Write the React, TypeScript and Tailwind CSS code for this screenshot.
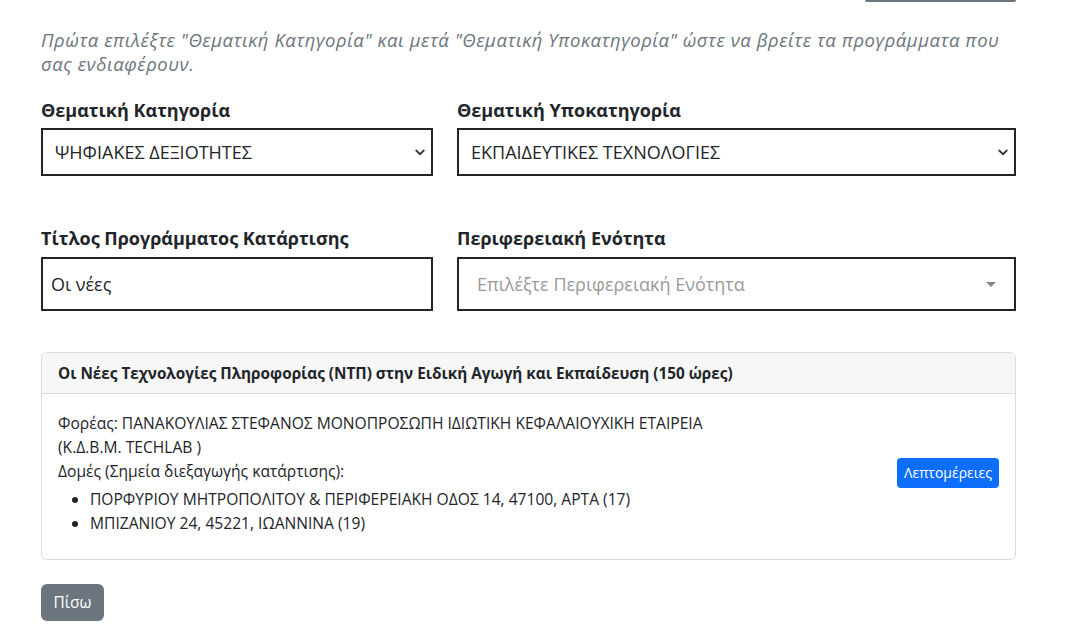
import React from 'react';

const font = { fontFamily: '"Open Sans", "Noto Sans", sans-serif' };

function Chevron() {
  return (
    <svg width="12" height="12" viewBox="0 0 16 16" className="text-[#343a40]">
      <path d="M3 6l5 5 5-5" fill="none" stroke="currentColor" strokeWidth="2.4" strokeLinecap="round" strokeLinejoin="round" />
    </svg>
  );
}

function SelectBox({ value }: { value: string }) {
  return (
    <div className="flex h-[48px] items-center justify-between border-2 border-[#212529] bg-white pl-[12px] pr-[5px] text-[18px] text-[#212529]">
      <span>{value}</span>
      <Chevron />
    </div>
  );
}

export default function App() {
  return (
    <div className="min-h-[643px] bg-white text-[#212529]" style={font}>
      <div className="ml-[41px] w-[975px]">
        <div className="flex justify-end">
          <div className="h-[2px] w-[151px] rounded-b bg-[#6c757d]" />
        </div>

        <p className="mt-[26px] max-w-[970px] text-[18.5px] italic leading-[24px] tracking-[0.03em] text-[#6c757d]">
          Πρώτα επιλέξτε "Θεματική Κατηγορία" και μετά "Θεματική Υποκατηγορία" ώστε να βρείτε τα προγράμματα που σας ενδιαφέρουν.
        </p>

        <div className="mt-[22px] grid grid-cols-[392px_559px] gap-x-[24px]">
          <div>
            <label className="block text-[18px] font-bold leading-[24px]">Θεματική Κατηγορία</label>
            <div className="mt-[6px]">
              <SelectBox value="ΨΗΦΙΑΚΕΣ ΔΕΞΙΟΤΗΤΕΣ" />
            </div>
          </div>
          <div>
            <label className="block text-[18px] font-bold leading-[24px]">Θεματική Υποκατηγορία</label>
            <div className="mt-[6px]">
              <SelectBox value="ΕΚΠΑΙΔΕΥΤΙΚΕΣ ΤΕΧΝΟΛΟΓΙΕΣ" />
            </div>
          </div>
        </div>

        <div className="mt-[50px] grid grid-cols-[392px_559px] gap-x-[24px]">
          <div>
            <label className="block text-[18px] font-bold leading-[24px]">Τίτλος Προγράμματος Κατάρτισης</label>
            <div className="mt-[7px] flex h-[54px] items-center border-2 border-[#212529] pl-[8px] text-[18px]">
              Οι νέες
            </div>
          </div>
          <div>
            <label className="block text-[18px] font-bold leading-[24px]">Περιφερειακή Ενότητα</label>
            <div className="mt-[7px] flex h-[54px] items-center justify-between border-2 border-[#212529] pl-[18px] pr-[18px] text-[18px] text-[#999]">
              <span>Επιλέξτε Περιφερειακή Ενότητα</span>
              <span className="h-0 w-0 border-x-[5px] border-t-[5px] border-x-transparent border-t-[#888]" />
            </div>
          </div>
        </div>

        <div className="mt-[41px] overflow-hidden rounded-[6px] border border-[#dcdcdc]">
          <div className="flex h-[41px] items-center border-b border-[#dcdcdc] bg-[#f7f7f7] px-[16px] text-[15.3px] font-bold">
            Οι Νέες Τεχνολογίες Πληροφορίας (ΝΤΠ) στην Ειδική Αγωγή και Εκπαίδευση (150 ώρες)
          </div>
          <div className="flex items-center justify-between px-[16px] pt-[17px] pb-[24px] text-[15.6px] leading-[24px]">
            <div>
              <div>Φορέας: ΠΑΝΑΚΟΥΛΙΑΣ ΣΤΕΦΑΝΟΣ ΜΟΝΟΠΡΟΣΩΠΗ ΙΔΙΩΤΙΚΗ ΚΕΦΑΛΑΙΟΥΧΙΚΗ ΕΤΑΙΡΕΙΑ</div>
              <div>(Κ.Δ.Β.Μ. TECHLAB )</div>
              <div>Δομές (Σημεία διεξαγωγής κατάρτισης):</div>
              <ul className="mt-[4px] list-disc pl-[32px]">
                <li>ΠΟΡΦΥΡΙΟΥ ΜΗΤΡΟΠΟΛΙΤΟΥ &amp; ΠΕΡΙΦΕΡΕΙΑΚΗ ΟΔΟΣ 14, 47100, ΑΡΤΑ (17)</li>
                <li>ΜΠΙΖΑΝΙΟΥ 24, 45221, ΙΩΑΝΝΙΝΑ (19)</li>
              </ul>
            </div>
            <button className="h-[30px] w-[102px] rounded-[4px] bg-[#0d6efd] text-[14px] text-white">Λεπτομέρειες</button>
          </div>
        </div>

        <button className="mt-[24px] h-[37px] w-[63px] rounded-[6px] bg-[#6c757d] text-[15.4px] text-white">Πίσω</button>
      </div>
    </div>
  );
}
